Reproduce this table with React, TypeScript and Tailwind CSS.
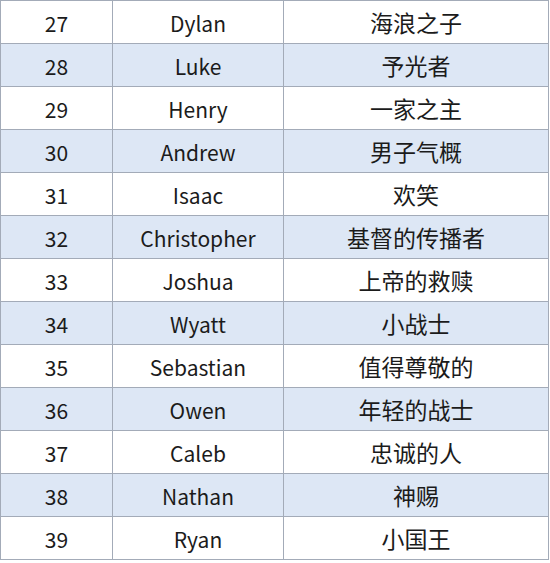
const rows: [number, string, string][] = [
  [27, "Dylan", "海浪之子"],
  [28, "Luke", "予光者"],
  [29, "Henry", "一家之主"],
  [30, "Andrew", "男子气概"],
  [31, "Isaac", "欢笑"],
  [32, "Christopher", "基督的传播者"],
  [33, "Joshua", "上帝的救赎"],
  [34, "Wyatt", "小战士"],
  [35, "Sebastian", "值得尊敬的"],
  [36, "Owen", "年轻的战士"],
  [37, "Caleb", "忠诚的人"],
  [38, "Nathan", "神赐"],
  [39, "Ryan", "小国王"],
];

export default function App() {
  return (
    <div className="w-[550px] h-[563px] bg-white overflow-hidden font-['Noto_Sans_CJK_SC',sans-serif] text-[#1b1b1b]">
      <div className="grid grid-cols-[112px_171px_265px] w-[549px] border-l border-t border-[#a3abb8]">
        {rows.map(([n, name, meaning], i) => {
          const bg = i % 2 === 1 ? "bg-[#dde7f5]" : "bg-white";
          return [
            <div key={`n${n}`} className={`${bg} h-[43px] pt-[2px] flex items-center justify-center border-r border-b border-[#a3abb8] text-[21px] leading-none`}>
              {n}
            </div>,
            <div key={`e${n}`} className={`${bg} h-[43px] pt-[2px] flex items-center justify-center border-r border-b border-[#a3abb8] text-[21px] leading-none`}>
              {name}
            </div>,
            <div key={`c${n}`} className={`${bg} h-[43px] pt-[1px] flex items-center justify-center border-r border-b border-[#a3abb8] text-[23px] leading-none`}>
              {meaning}
            </div>,
          ];
        })}
      </div>
    </div>
  );
}
